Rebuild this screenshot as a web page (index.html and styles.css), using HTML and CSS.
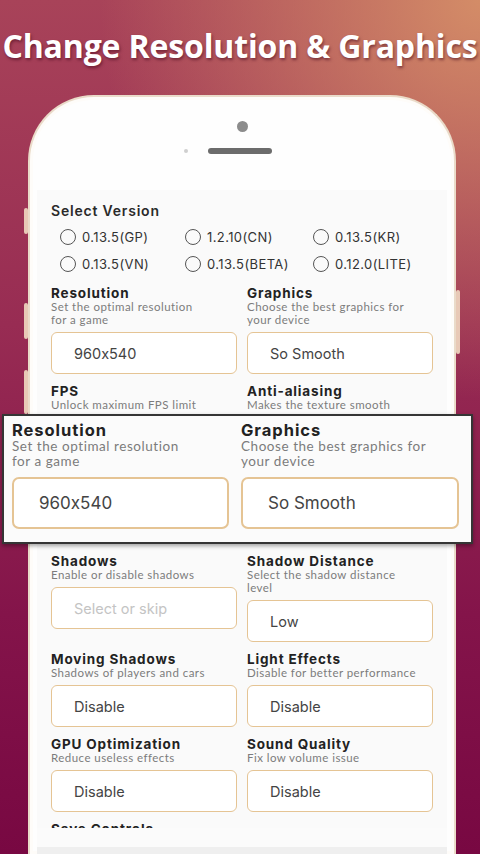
FILE: index.html
```html
<!DOCTYPE html>
<html>
<head>
<meta charset="utf-8">
<link rel="stylesheet" href="styles.css">
</head>
<body>
<div class="page">
  <h1 class="title">Change Resolution &amp; Graphics</h1>
  <div class="phone">
    <span class="side-btn btn-l1"></span>
    <span class="side-btn btn-l2"></span>
    <span class="side-btn btn-l3"></span>
    <span class="side-btn btn-r1"></span>
    <div class="phone-top">
      <span class="camera"></span>
      <div class="speaker-row"><span class="sensor"></span><span class="speaker"></span></div>
    </div>
    <div class="screen">
      <div class="content">
        <div class="section-title">Select Version</div>
        <div class="radios">
          <label class="radio"><span class="circle"></span>0.13.5(GP)</label>
          <label class="radio"><span class="circle"></span>1.2.10(CN)</label>
          <label class="radio"><span class="circle"></span>0.13.5(KR)</label>
          <label class="radio"><span class="circle"></span>0.13.5(VN)</label>
          <label class="radio"><span class="circle"></span>0.13.5(BETA)</label>
          <label class="radio"><span class="circle"></span>0.12.0(LITE)</label>
        </div>
        <div class="fields">
          <div class="field">
            <div class="f-title">Resolution</div>
            <div class="f-desc">Set the optimal resolution<br>for a game</div>
            <div class="f-box">960x540</div>
          </div>
          <div class="field">
            <div class="f-title">Graphics</div>
            <div class="f-desc">Choose the best graphics for<br>your device</div>
            <div class="f-box">So Smooth</div>
          </div>
          <div class="field">
            <div class="f-title">FPS</div>
            <div class="f-desc">Unlock maximum FPS limit</div>
            <div class="f-box covered">60 FPS</div>
          </div>
          <div class="field">
            <div class="f-title">Anti-aliasing</div>
            <div class="f-desc">Makes the texture smooth</div>
            <div class="f-box covered">Disable</div>
          </div>
          <div class="field covered">
            <div class="f-title">Style</div>
            <div class="f-desc">Choose the graphics style</div>
            <div class="f-box">Classic</div>
          </div>
          <div class="field covered">
            <div class="f-title">Brightness</div>
            <div class="f-desc">Adjust the game brightness</div>
            <div class="f-box">Default</div>
          </div>
          <div class="field">
            <div class="f-title">Shadows</div>
            <div class="f-desc">Enable or disable shadows</div>
            <div class="f-box placeholder">Select or skip</div>
          </div>
          <div class="field">
            <div class="f-title">Shadow Distance</div>
            <div class="f-desc">Select the shadow distance<br>level</div>
            <div class="f-box">Low</div>
          </div>
          <div class="field">
            <div class="f-title">Moving Shadows</div>
            <div class="f-desc">Shadows of players and cars</div>
            <div class="f-box">Disable</div>
          </div>
          <div class="field">
            <div class="f-title">Light Effects</div>
            <div class="f-desc">Disable for better performance</div>
            <div class="f-box">Disable</div>
          </div>
          <div class="field">
            <div class="f-title">GPU Optimization</div>
            <div class="f-desc">Reduce useless effects</div>
            <div class="f-box">Disable</div>
          </div>
          <div class="field">
            <div class="f-title">Sound Quality</div>
            <div class="f-desc">Fix low volume issue</div>
            <div class="f-box">Disable</div>
          </div>
          <div class="field">
            <div class="f-title">Save Controls</div>
          </div>
        </div>
      </div>
      <div class="screen-foot"></div>
      <div class="navbar"></div>
    </div>
  </div>
  <div class="zoom-card">
    <div class="z-field">
      <div class="z-title">Resolution</div>
      <div class="z-desc">Set the optimal resolution<br>for a game</div>
      <div class="z-box">960x540</div>
    </div>
    <div class="z-field">
      <div class="z-title">Graphics</div>
      <div class="z-desc">Choose the best graphics for<br>your device</div>
      <div class="z-box">So Smooth</div>
    </div>
  </div>
</div>
</body>
</html>
```

FILE: styles.css
```css
* { box-sizing: border-box; }
html, body { margin: 0; padding: 0; }
body {
  width: 480px;
  height: 854px;
  overflow: hidden;
  font-family: "Lato", "Open Sans", sans-serif;
  font-feature-settings: "calt" 0;
}
.page {
  position: relative;
  width: 480px;
  height: 854px;
  overflow: hidden;
  background:
    radial-gradient(ellipse 110% 65% at 100% 0%, rgba(214, 144, 104, 0.95), rgba(214, 144, 104, 0) 72%),
    linear-gradient(180deg, #a84359 0%, #982c53 38%, #84144a 72%, #780842 100%);
}
.title {
  margin: 0;
  height: 95px;
  padding-top: 26px;
  text-align: center;
  font-family: "Open Sans", sans-serif;
  font-weight: 700;
  font-size: 32px;
  line-height: 40px;
  letter-spacing: -0.15px;
  color: #fff;
  white-space: nowrap;
  text-shadow: 1px 2px 3px rgba(70, 10, 30, 0.55);
}
.phone {
  position: relative;
  margin-left: 28px;
  width: 428px;
  height: 759px;
  background: #fefefe;
  border: 2px solid #eadbc9;
  border-bottom: none;
  border-radius: 66px 66px 0 0;
  box-shadow: inset 0 0 0 3px #fefcf9;
}
.side-btn {
  position: absolute;
  width: 4px;
  background: #e8c9b6;
  border-radius: 2px;
}
.btn-l1 { left: -6px; top: 111px; height: 26px; }
.btn-l2 { left: -6px; top: 206px; height: 36px; }
.btn-l3 { left: -6px; top: 273px; height: 44px; }
.btn-r1 { right: -6px; top: 193px; height: 64px; }
.phone-top {
  height: 93px;
  display: flex;
  flex-direction: column;
  align-items: center;
  padding-top: 24px;
}
.camera {
  width: 11px;
  height: 11px;
  border-radius: 50%;
  background: #8c8c8c;
}
.speaker-row {
  margin-top: 16px;
  display: flex;
  align-items: center;
  gap: 20px;
  margin-left: -28px;
}
.sensor {
  width: 4px;
  height: 4px;
  border-radius: 50%;
  background: #cfcfcf;
}
.speaker {
  width: 64px;
  height: 6px;
  border-radius: 3px;
  background: #6c6c6c;
}
.screen {
  margin: 0 7px;
  height: 664px;
  background: #fafafa;
}
.content {
  height: 638px;
  overflow: hidden;
  padding: 13px 14px 0;
}
.screen-foot {
  height: 19px;
  background: #fbfbfb;
}
.navbar {
  height: 7px;
  background: #efefef;
}
.section-title {
  font-family: "Inter", sans-serif;
  font-weight: 600;
  font-size: 14px;
  line-height: 16px;
  letter-spacing: 0.8px;
  color: #2a2a2a;
}
.radios {
  margin-top: 9px;
  padding-left: 9px;
  display: grid;
  grid-template-columns: 125px 128px auto;
  row-gap: 9px;
}
.radio {
  display: flex;
  align-items: center;
  gap: 6px;
  height: 18px;
  font-family: "Inter", sans-serif;
  font-size: 13px;
  letter-spacing: 0.4px;
  color: #333;
  white-space: nowrap;
}
.circle {
  width: 16px;
  height: 16px;
  border: 1.5px solid #555;
  border-radius: 50%;
  flex: none;
}
.fields {
  margin-top: 13px;
  display: grid;
  grid-template-columns: 186px 186px;
  column-gap: 10px;
  row-gap: 10px;
  align-items: start;
}
.covered { visibility: hidden; }
.f-title {
  font-family: "Inter", sans-serif;
  font-weight: 700;
  font-size: 13.5px;
  line-height: 14px;
  letter-spacing: 0.85px;
  color: #222;
  white-space: nowrap;
}
.f-desc {
  font-size: 11.5px;
  line-height: 13px;
  letter-spacing: 0.45px;
  color: #7c7c7c;
  white-space: nowrap;
}
.f-box {
  margin-top: 6px;
  height: 42px;
  border: 1.5px solid #e5c494;
  border-radius: 6px;
  background: #fff;
  display: flex;
  align-items: center;
  padding-left: 22px;
  font-family: "Inter", sans-serif;
  font-size: 14.5px;
  color: #444;
}
.f-box.placeholder { color: #c4c4c4; }
.zoom-card {
  position: absolute;
  left: 2px;
  top: 414px;
  width: 471px;
  height: 130px;
  background: #fbfbfb;
  border: 2px solid #353535;
  box-shadow: 0 2px 4px rgba(0, 0, 0, 0.35);
  display: grid;
  grid-template-columns: 217px 218px;
  column-gap: 12px;
  padding: 6px 0 0 8px;
}
.z-title {
  font-family: "Inter", sans-serif;
  font-weight: 700;
  font-size: 16.5px;
  line-height: 17px;
  letter-spacing: 0.95px;
  color: #222;
}
.z-desc {
  font-size: 13.5px;
  line-height: 15px;
  letter-spacing: 0.55px;
  color: #7c7c7c;
  white-space: nowrap;
}
.z-box {
  margin-top: 8px;
  height: 52px;
  border: 2px solid #e5c494;
  border-radius: 7px;
  background: #fff;
  display: flex;
  align-items: center;
  padding-left: 25px;
  font-family: "Inter", sans-serif;
  font-size: 17px;
  color: #444;
}
```
